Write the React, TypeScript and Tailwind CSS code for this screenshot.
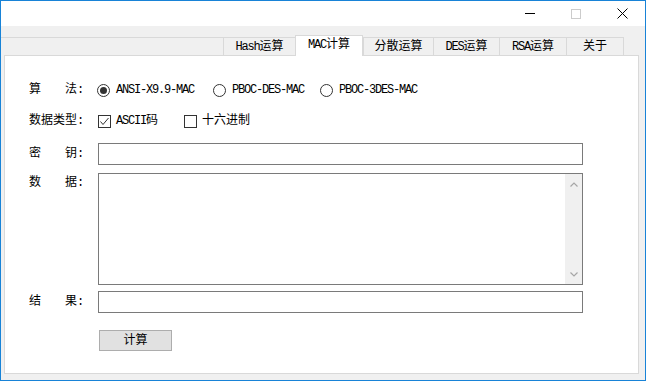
import type { ReactNode } from 'react'

const Latin = ({ children }: { children: ReactNode }) => (
  <span className="tracking-[-1.2px]">{children}</span>
)

const FieldLabel = ({ text }: { text: string }) => (
  <div className="w-[69px] shrink-0 whitespace-pre leading-[20px]">
    {text}
    <Latin>:</Latin>
  </div>
)

const Radio = ({ checked, label, width }: { checked?: boolean; label: string; width: string }) => (
  <div className={`flex items-center ${width}`}>
    <div className="-ml-px flex h-[13px] w-[13px] items-center justify-center rounded-full border border-[#333333] bg-white">
      {checked && <div className="h-[7px] w-[7px] rounded-full bg-[#333333]" />}
    </div>
    <div className="ml-[6px] leading-[20px]">
      <Latin>{label}</Latin>
    </div>
  </div>
)

const Checkbox = ({ checked, children, width }: { checked?: boolean; children: ReactNode; width?: string }) => (
  <div className={`flex items-center ${width ?? ''}`}>
    <div className="flex h-[13px] w-[13px] items-center justify-center border border-[#333333] bg-white">
      {checked && (
        <svg width="11" height="11" viewBox="0 0 11 11">
          <polyline points="1.5,5.5 4,8.5 9.5,2" fill="none" stroke="#333333" strokeWidth="1" />
        </svg>
      )}
    </div>
    <div className="ml-[5px] leading-[20px]">{children}</div>
  </div>
)

const tabs = [
  { key: 'hash', label: <><Latin>Hash</Latin>运算</>, w: 'w-[72px]' },
  { key: 'mac', label: <><Latin>MAC</Latin>计算</>, w: 'w-[68px]', active: true },
  { key: 'div', label: <>分散运算</>, w: 'w-[70px]' },
  { key: 'des', label: <><Latin>DES</Latin>运算</>, w: 'w-[66px]' },
  { key: 'rsa', label: <><Latin>RSA</Latin>运算</>, w: 'w-[67px]' },
  { key: 'about', label: <>关于</>, w: 'w-[58px]', last: true },
]

export default function App() {
  return (
    <div className="flex h-[381px] w-[646px] flex-col overflow-hidden border border-[#1883d7] bg-[#f0f0f0] font-[Liberation_Mono,Noto_Sans_CJK_SC,monospace] text-[12px] text-black">
      {/* title bar */}
      <div className="flex h-[25px] shrink-0 justify-end bg-white">
        <div className="flex w-[46px] items-center justify-center">
          <div className="h-px w-[10px] bg-black" />
        </div>
        <div className="flex w-[46px] items-center justify-center">
          <div className="h-[10px] w-[10px] border border-[#cccccc]" />
        </div>
        <div className="flex w-[46px] items-center justify-center">
          <svg width="11" height="11" viewBox="0 0 11 11">
            <path d="M0.5 0.5 L10.5 10.5 M10.5 0.5 L0.5 10.5" stroke="#000" strokeWidth="1" />
          </svg>
        </div>
      </div>

      {/* tab strip */}
      <div className="mt-[9px] flex h-[20px] shrink-0 items-end">
        <div className="h-[18px] w-[222px] border-t border-[#d9d9d9]" />
        {tabs.map((t) =>
          t.active ? (
            <div
              key={t.key}
              className={`relative z-10 -mb-px flex h-[21px] items-center justify-center border border-b-0 border-[#d9d9d9] bg-white pb-[2px] leading-none ${t.w}`}
            >
              {t.label}
            </div>
          ) : (
            <div
              key={t.key}
              className={`flex h-[18px] items-center justify-center border-t border-l border-[#d9d9d9] bg-[#f0f0f0] leading-none ${t.last ? 'border-r' : ''} ${t.w}`}
            >
              {t.label}
            </div>
          )
        )}
      </div>

      {/* panel */}
      <div className="ml-[3px] flex h-[319px] w-[635px] flex-col border border-[#d9d9d9] bg-white pl-[24px] pt-[24px]">
        <div className="flex h-[20px] items-center">
          <FieldLabel text="算　　法" />
          <Radio checked label="ANSI-X9.9-MAC" width="w-[116px]" />
          <Radio label="PBOC-DES-MAC" width="w-[107px]" />
          <Radio label="PBOC-3DES-MAC" width="w-[100px]" />
        </div>

        <div className="mt-[11px] flex h-[20px] items-center">
          <FieldLabel text="数据类型" />
          <Checkbox checked width="w-[86px]">
            <Latin>ASCII</Latin>码
          </Checkbox>
          <Checkbox>十六进制</Checkbox>
        </div>

        <div className="mt-[12px] flex items-center">
          <FieldLabel text="密　　钥" />
          <div className="h-[22px] w-[485px] border border-[#7a7a7a] bg-white" />
        </div>

        <div className="mt-[8px] flex items-start">
          <FieldLabel text="数　　据" />
          <div className="flex h-[112px] w-[485px] justify-end border border-[#7a7a7a] bg-white">
            <div className="flex w-[17px] flex-col items-center justify-between bg-[#f0f0f0] pb-[7px] pt-[8px]">
              <svg width="8" height="5" viewBox="0 0 8 5">
                <polyline points="0.5,4.5 4,1 7.5,4.5" fill="none" stroke="#a6a6a6" strokeWidth="1.2" />
              </svg>
              <svg width="8" height="5" viewBox="0 0 8 5">
                <polyline points="0.5,0.5 4,4 7.5,0.5" fill="none" stroke="#a6a6a6" strokeWidth="1.2" />
              </svg>
            </div>
          </div>
        </div>

        <div className="mt-[6px] flex items-center">
          <FieldLabel text="结　　果" />
          <div className="h-[22px] w-[485px] border border-[#7a7a7a] bg-white" />
        </div>

        <div className="ml-[70px] mt-[17px] flex h-[21px] w-[73px] items-center justify-center border border-[#adadad] bg-[#e1e1e1] leading-none">
          计算
        </div>
      </div>
    </div>
  )
}
